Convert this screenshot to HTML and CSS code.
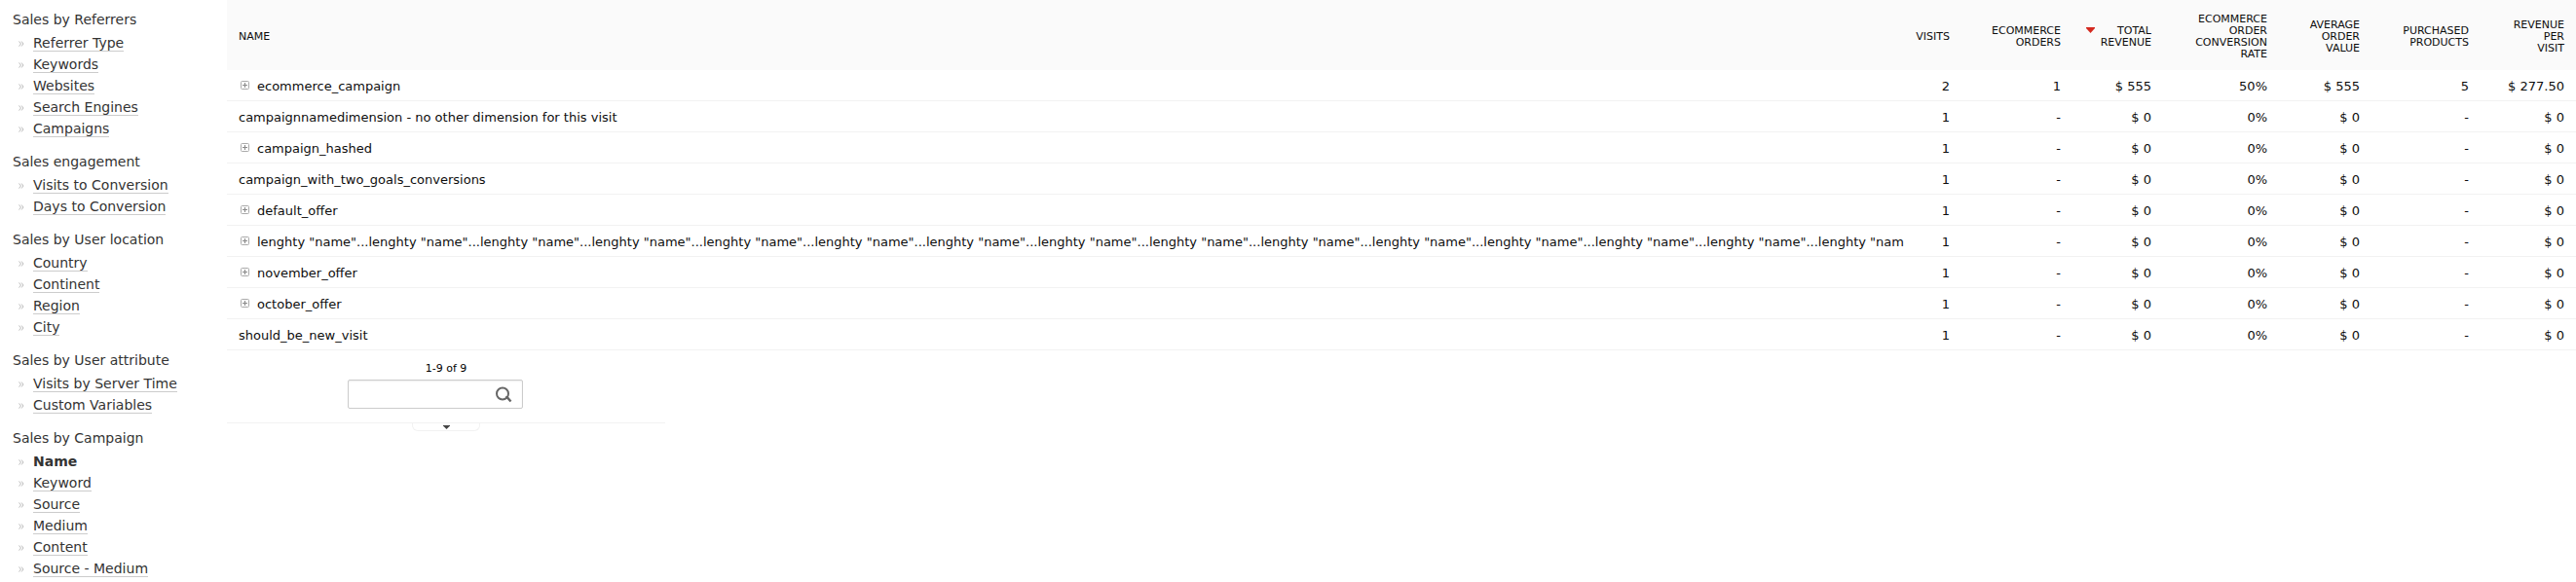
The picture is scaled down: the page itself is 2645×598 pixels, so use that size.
FILE: index.html
```html
<!DOCTYPE html>
<html lang="en">
<head>
<meta charset="utf-8">
<title>Sales by Campaign</title>
<link rel="stylesheet" href="styles.css">
</head>
<body>
<svg class="defs" width="0" height="0" aria-hidden="true">
  <symbol id="plus" viewBox="0 0 9 9"><rect x=".5" y=".5" width="8" height="8" rx="1" fill="none" stroke="#aaa"/><path d="M2 4.500h5M4.500 2v5" stroke="#888" fill="none"/></symbol>
</svg>
<div class="page">
  <nav class="sidebar">
    <section class="group"><h2 class="group-title">Sales by Referrers</h2>
      <ul class="links">
        <li><a href="#">Referrer Type</a></li>
        <li><a href="#">Keywords</a></li>
        <li><a href="#">Websites</a></li>
        <li><a href="#">Search Engines</a></li>
        <li><a href="#">Campaigns</a></li>
      </ul></section>
    <section class="group"><h2 class="group-title">Sales engagement</h2>
      <ul class="links">
        <li><a href="#">Visits to Conversion</a></li>
        <li><a href="#">Days to Conversion</a></li>
      </ul></section>
    <section class="group"><h2 class="group-title">Sales by User location</h2>
      <ul class="links">
        <li><a href="#">Country</a></li>
        <li><a href="#">Continent</a></li>
        <li><a href="#">Region</a></li>
        <li><a href="#">City</a></li>
      </ul></section>
    <section class="group"><h2 class="group-title">Sales by User attribute</h2>
      <ul class="links">
        <li><a href="#">Visits by Server Time</a></li>
        <li><a href="#">Custom Variables</a></li>
      </ul></section>
    <section class="group"><h2 class="group-title">Sales by Campaign</h2>
      <ul class="links">
        <li><a class="active" href="#">Name</a></li>
        <li><a href="#">Keyword</a></li>
        <li><a href="#">Source</a></li>
        <li><a href="#">Medium</a></li>
        <li><a href="#">Content</a></li>
        <li><a href="#">Source - Medium</a></li>
      </ul></section>
  </nav>
  <main class="report">
    <table class="data">
      <colgroup><col><col class="c-visits"><col class="c-orders"><col class="c-revenue"><col class="c-rate"><col class="c-average"><col class="c-products"><col class="c-per-visit"></colgroup>
      <thead>
        <tr>
          <th scope="col">Name</th>
          <th scope="col">Visits</th>
          <th scope="col">Ecommerce Orders</th>
          <th scope="col" aria-sort="descending"><div class="sorted"><svg class="sort" width="9" height="6" viewBox="0 0 9 6" aria-hidden="true"><path d="M0 0h9v1L4.500 6 0 1z" fill="#d4291f"/></svg><span>Total Revenue</span></div></th>
          <th scope="col">Ecommerce Order Conversion Rate</th>
          <th scope="col">Average Order Value</th>
          <th scope="col">Purchased Products</th>
          <th scope="col">Revenue<br>Per<br>Visit</th>
        </tr>
      </thead>
      <tbody>
        <tr><td><svg class="plus"><use href="#plus"/></svg>ecommerce_campaign</td><td>2</td><td>1</td><td>$ 555</td><td>50%</td><td>$ 555</td><td>5</td><td>$ 277.50</td></tr>
        <tr><td>campaignnamedimension - no other dimension for this visit</td><td>1</td><td>-</td><td>$ 0</td><td>0%</td><td>$ 0</td><td>-</td><td>$ 0</td></tr>
        <tr><td><svg class="plus"><use href="#plus"/></svg>campaign_hashed</td><td>1</td><td>-</td><td>$ 0</td><td>0%</td><td>$ 0</td><td>-</td><td>$ 0</td></tr>
        <tr><td>campaign_with_two_goals_conversions</td><td>1</td><td>-</td><td>$ 0</td><td>0%</td><td>$ 0</td><td>-</td><td>$ 0</td></tr>
        <tr><td><svg class="plus"><use href="#plus"/></svg>default_offer</td><td>1</td><td>-</td><td>$ 0</td><td>0%</td><td>$ 0</td><td>-</td><td>$ 0</td></tr>
        <tr><td><svg class="plus"><use href="#plus"/></svg>lenghty "name"...lenghty "name"...lenghty "name"...lenghty "name"...lenghty "name"...lenghty "name"...lenghty "name"...lenghty "name"...lenghty "name"...lenghty "name"...lenghty "name"...lenghty "name"...lenghty "name"...lenghty "name"...lenghty "nam</td><td>1</td><td>-</td><td>$ 0</td><td>0%</td><td>$ 0</td><td>-</td><td>$ 0</td></tr>
        <tr><td><svg class="plus"><use href="#plus"/></svg>november_offer</td><td>1</td><td>-</td><td>$ 0</td><td>0%</td><td>$ 0</td><td>-</td><td>$ 0</td></tr>
        <tr><td><svg class="plus"><use href="#plus"/></svg>october_offer</td><td>1</td><td>-</td><td>$ 0</td><td>0%</td><td>$ 0</td><td>-</td><td>$ 0</td></tr>
        <tr><td>should_be_new_visit</td><td>1</td><td>-</td><td>$ 0</td><td>0%</td><td>$ 0</td><td>-</td><td>$ 0</td></tr>
      </tbody>
    </table>
    <footer class="footer">
      <div class="pages">1-9 of 9</div>
      <form class="search">
        <input class="search-input" type="text" aria-label="Search">
        <button class="search-button" type="button" aria-label="Search"><svg width="17" height="17" viewBox="0 0 17 17"><circle cx="7" cy="7.500" r="6" fill="none" stroke="#666" stroke-width="2"/><path d="M10 11.500h2l3.500 4" stroke="#666" stroke-width="2.500" fill="none"/></svg></button>
      </form>
      <div class="rule"><button class="expand" type="button" aria-label="Show options"><svg width="7" height="4" viewBox="0 0 7 4"><path d="M0 0h7v.6L3.500 4 0 .6z" fill="#444"/></svg></button></div>
    </footer>
  </main>
</div>
</body>
</html>
```

FILE: styles.css
```css
body {
  margin: 0;
  background: #fff;
  color: #000;
  font-family: "DejaVu Sans", Verdana, sans-serif;
  font-size: 13px;
}
.defs { position: absolute; }
.page { display: flex; align-items: flex-start; }
.sidebar {
  box-sizing: border-box;
  flex: 0 0 233px;
  padding: 9px 0 0 13px;
  color: #333;
  font-size: 14px;
  line-height: 22px;
}
.group { margin-bottom: 12px; }
.group-title {
  margin: 0 0 2px;
  font-size: 14px;
  font-weight: 400;
}
.links { margin: 0; padding: 0; list-style: none; }
.links li {
  display: flex;
  height: 22px;
  padding-left: 21px;
  background: url("data:image/svg+xml,%3Csvg xmlns='http://www.w3.org/2000/svg' width='6' height='6'%3E%3Cpath d='M.5 .5L2.500 3 .5 5.500M3 .5L5 3 3 5.500' fill='none' stroke='%23bbb'/%3E%3C/svg%3E") no-repeat 6px 9px;
}
.links a {
  height: 19px;
  line-height: 22px;
  border-bottom: 1px solid #ccc;
  color: #333;
  text-decoration: none;
}
.links .active { border: 0; font-weight: 700; }
.report { flex: 1; min-width: 0; }
.data {
  width: 100%;
  table-layout: fixed;
  border-collapse: separate;
  border-spacing: 0;
}
.c-visits { width: 65px; }
.c-orders { width: 114px; }
.c-revenue { width: 93px; }
.c-rate { width: 119px; }
.c-average { width: 95px; }
.c-products { width: 112px; }
.c-per-visit { width: 98px; }
.data th {
  height: 48px;
  padding: 14px 12px 10px;
  background: #fafafa;
  color: #0d0d0d;
  font-size: 11px;
  font-weight: 400;
  line-height: 12px;
  text-align: right;
  text-transform: uppercase;
}
.data td {
  height: 29px;
  padding: 2px 12px 0;
  border-bottom: 1px solid #f2f2f2;
  color: #0d0d0d;
  line-height: 29px;
  text-align: right;
  white-space: nowrap;
}
.data th:first-child, .data td:first-child { text-align: left; }
.data td:first-child { padding-right: 0; }
.sorted { display: flex; justify-content: flex-end; }
.sort { flex: none; margin: 2px 3px 0 2px; }
.plus {
  width: 9px;
  height: 9px;
  margin: 0 8px 1px 2px;
}
.footer {
  width: 450px;
  display: flex;
  flex-direction: column;
  align-items: center;
}
.pages { margin-top: 13px; font-size: 11px; line-height: 12px; }
.search {
  box-sizing: border-box;
  display: flex;
  width: 180px;
  height: 30px;
  margin: 5px 22px 14px 0;
  border: 1px solid #ccc;
  border-radius: 2px;
  box-shadow: inset 0 1px 2px #eee;
}
.search-input {
  flex: 1;
  min-width: 0;
  padding: 0 8px;
  border: 0;
  background: transparent;
}
.search-button, .expand {
  display: flex;
  align-items: center;
  justify-content: center;
  padding: 0;
  border: 0;
  background: transparent;
}
.search-button { width: 38px; }
.rule {
  display: flex;
  justify-content: center;
  width: 100%;
  border-top: 1px solid #f2f2f2;
}
.expand {
  width: 70px;
  height: 8px;
  border: 1px solid #f2f2f2;
  border-top: 0;
  border-radius: 0 0 6px 6px;
}
```
